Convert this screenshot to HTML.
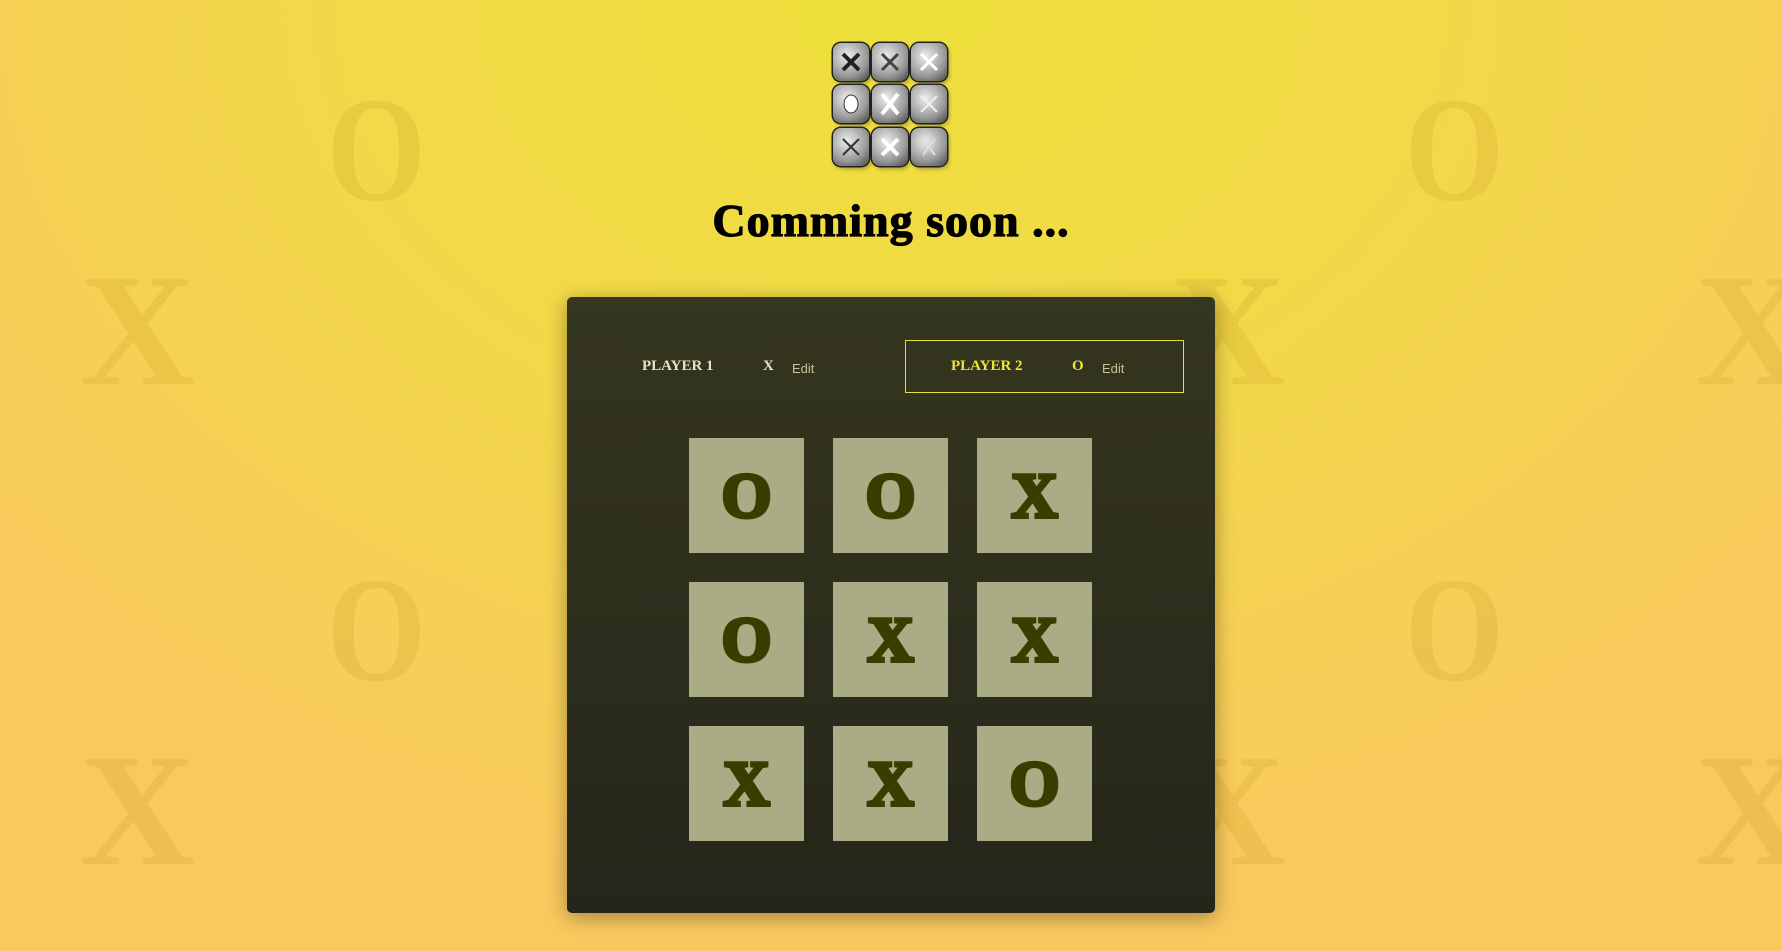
<!DOCTYPE html>
<html><head><meta charset="utf-8"><style>
html,body{margin:0;width:1782px;height:951px;overflow:hidden}
body{background:radial-gradient(ellipse 1200px 900px at 891px 0px,#eee03a 0%,#f2d948 45%,#f9c95e 100%);font-family:"Liberation Serif",serif;position:relative}
.bg{position:absolute;font-family:"Liberation Serif",serif;font-weight:bold;color:rgba(205,165,40,0.25);line-height:1}
.logo{position:absolute;left:833px;top:43px;width:116px;height:124px;display:grid;grid-template-columns:repeat(3,36px);grid-gap:3px}
.lc{width:36px;height:38px;border-radius:8px;background:radial-gradient(circle at 40% 35%,#eee,#999 60%,#444);box-shadow:0 0 0 1.5px #222,2px 3px 4px rgba(0,0,0,.3);display:flex;align-items:center;justify-content:center}
h1{position:absolute;left:0;width:1782px;top:194px;margin:0;text-align:center;font-size:46px;font-weight:bold;letter-spacing:1px;-webkit-text-stroke:1.2px #000}
.panel{position:absolute;left:567px;top:297px;width:648px;height:616px;border-radius:5px;background:linear-gradient(#35361f,#25261a);box-shadow:0 4px 20px rgba(0,0,0,.35)}
.t{position:absolute;font-weight:bold;font-size:15px;top:61px}
.e{position:absolute;font-family:"Liberation Sans",sans-serif;font-size:13px;color:#c8c29a;top:64px}
.box{position:absolute;left:338px;top:43px;width:279px;height:53px;border:1px solid #e3e03a;box-sizing:border-box}
.cell{position:absolute;width:115px;height:115px;background:#a9ac84;color:#3a3d00;font-weight:bold;font-size:64px;-webkit-text-stroke:4px #3a3d00;display:flex;align-items:center;justify-content:center;line-height:1}
</style></head><body>
<div class="bg" style="left:318px;top:75px;font-size:150px;transform:scaleX(.85)">O</div>
<div class="bg" style="left:1396px;top:75px;font-size:150px;transform:scaleX(.85)">O</div>
<div class="bg" style="left:318px;top:555px;font-size:150px;transform:scaleX(.85)">O</div>
<div class="bg" style="left:1396px;top:555px;font-size:150px;transform:scaleX(.85)">O</div>
<div class="bg" style="left:80px;top:250px;font-size:160px">X</div>
<div class="bg" style="left:80px;top:730px;font-size:160px">X</div>
<div class="bg" style="left:1695px;top:250px;font-size:160px">X</div>
<div class="bg" style="left:1695px;top:730px;font-size:160px">X</div>
<div class="bg" style="left:1170px;top:250px;font-size:160px">X</div>
<div class="bg" style="left:1170px;top:730px;font-size:160px">X</div>
<div class="logo">
<div class="lc"><svg width="24" height="24"><path d="M4 4L20 20M20 4L4 20" stroke="#222" stroke-width="4"/></svg></div>
<div class="lc"><svg width="24" height="24"><path d="M4 4L20 20M20 4L4 20" stroke="#444" stroke-width="3"/></svg></div>
<div class="lc"><svg width="24" height="24"><path d="M4 4L20 20M20 4L4 20" stroke="#fff" stroke-width="3"/></svg></div>
<div class="lc"><svg width="24" height="24"><ellipse cx="12" cy="12" rx="7" ry="9" fill="#fff" stroke="#333"/></svg></div>
<div class="lc"><svg width="24" height="24"><path d="M4 2L20 22M20 2L4 22" stroke="#fff" stroke-width="4"/></svg></div>
<div class="lc"><svg width="24" height="24"><path d="M4 4L20 20M20 4L4 20" stroke="#eee" stroke-width="2"/></svg></div>
<div class="lc"><svg width="24" height="24"><path d="M4 4L20 20M20 4L4 20" stroke="#333" stroke-width="2"/></svg></div>
<div class="lc"><svg width="24" height="24"><path d="M4 4L20 20M20 4L4 20" stroke="#fff" stroke-width="4"/></svg></div>
<div class="lc"><svg width="24" height="24"><path d="M6 4L18 20M18 4L6 20" stroke="#ddd" stroke-width="2"/></svg></div>
</div>
<h1>Comming soon ...</h1>
<div class="panel">
<div class="t" style="left:75px;color:#e6e2c8">PLAYER 1</div>
<div class="t" style="left:196px;color:#e6e2c8">X</div>
<div class="e" style="left:225px">Edit</div>
<div class="box"></div>
<div class="t" style="left:384px;color:#eee33a">PLAYER 2</div>
<div class="t" style="left:505px;color:#eee33a">O</div>
<div class="e" style="left:535px">Edit</div>
<div class="cell" style="left:122px;top:141px">O</div>
<div class="cell" style="left:266px;top:141px">O</div>
<div class="cell" style="left:410px;top:141px">X</div>
<div class="cell" style="left:122px;top:285px">O</div>
<div class="cell" style="left:266px;top:285px">X</div>
<div class="cell" style="left:410px;top:285px">X</div>
<div class="cell" style="left:122px;top:429px">X</div>
<div class="cell" style="left:266px;top:429px">X</div>
<div class="cell" style="left:410px;top:429px">O</div>
</div>
</body></html>
